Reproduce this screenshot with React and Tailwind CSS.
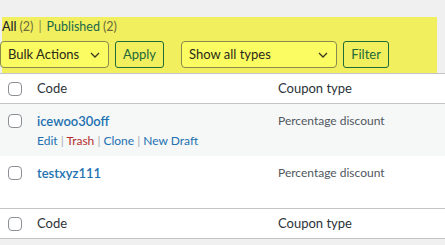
const Checkbox = () => (
  <span className="block w-[14px] h-[14px] rounded-[4px] border border-[#8c8f94] bg-white" />
);

const Chevron = () => (
  <svg width="12" height="12" viewBox="0 0 12 12" className="text-[#3a3a20]">
    <path d="M2 4 L6 8 L10 4" fill="none" stroke="currentColor" strokeWidth="1.3" />
  </svg>
);

const Select = ({ label, width }) => (
  <div
    className={`${width} h-[27px] flex items-center justify-between pl-[7px] pr-[7px] rounded-[4px] border border-[#8a8a4e] bg-[#fbfb62] text-[13px] text-[#2a2a18]`}
  >
    <span>{label}</span>
    <Chevron />
  </div>
);

const Button = ({ label, width }) => (
  <div
    className={`${width} h-[27px] flex items-center justify-center rounded-[3px] border border-[#1f6b35] text-[13px] text-[#22683a]`}
  >
    {label}
  </div>
);

const Sep = () => <span className="text-[#a7aaad]">|</span>;

const Row = ({ code, actions, bg }) => (
  <div className={`flex h-[52px] ${bg}`}>
    <div className="w-[37px] pl-[8px] pt-[10px]">
      <Checkbox />
    </div>
    <div className="w-[241px] pt-[8px]">
      <div className="text-[13px] font-semibold text-[#2271b1] leading-[18px]">{code}</div>
      {actions && (
        <div className="text-[12px] text-[#2271b1] leading-[18px] mt-[2px]">
          Edit <Sep /> <span className="text-[#b32d2e]">Trash</span> <Sep /> Clone{" "}
          <Sep /> New Draft
        </div>
      )}
    </div>
    <div className="flex-1 pt-[8px] text-[12px] text-[#50575e] leading-[18px]">
      Percentage discount
    </div>
  </div>
);

const HeadRow = ({ border }) => (
  <div className={`flex h-[30px] items-center bg-white ${border}`}>
    <div className="w-[37px] pl-[8px]">
      <Checkbox />
    </div>
    <div className="w-[241px] text-[13px] text-[#2c3338]">Code</div>
    <div className="flex-1 text-[13px] text-[#2c3338]">Coupon type</div>
  </div>
);

export default function App() {
  return (
    <div className="w-[445px] h-[245px] overflow-hidden bg-[#f0f0f1] font-['Lato',sans-serif]">
      <div className="h-[17px]" />
      <div className="ml-[2px] w-[435px] h-[56px] bg-[#f1ef5e]">
        <div className="flex items-center h-[17px] pt-[2px] text-[12.5px] leading-[16px]">
          <span className="font-medium text-[#1d2327]">All</span>
          <span className="ml-[3px] text-[#6b6a3a]">(2)</span>
          <span className="mx-[5px] text-[#8c8a4e]">|</span>
          <span className="text-[#17684a]">Published</span>
          <span className="ml-[3px] text-[#6b6a3a]">(2)</span>
        </div>
        <div className="flex items-center mt-[7px] -ml-[2px]">
          <Select label="Bulk Actions" width="w-[109px]" />
          <div className="ml-[6px]">
            <Button label="Apply" width="w-[49px]" />
          </div>
          <div className="ml-[17px]">
            <Select label="Show all types" width="w-[156px]" />
          </div>
          <div className="ml-[6px]">
            <Button label="Filter" width="w-[46px]" />
          </div>
        </div>
      </div>
      <div className="border-t border-[#c3c4c7] border-b">
        <HeadRow border="border-b border-[#c3c4c7]" />
        <Row code="icewoo30off" actions bg="bg-[#f6f7f7]" />
        <Row code="testxyz111" bg="bg-white" />
        <HeadRow border="border-t border-[#c3c4c7]" />
      </div>
    </div>
  );
}
